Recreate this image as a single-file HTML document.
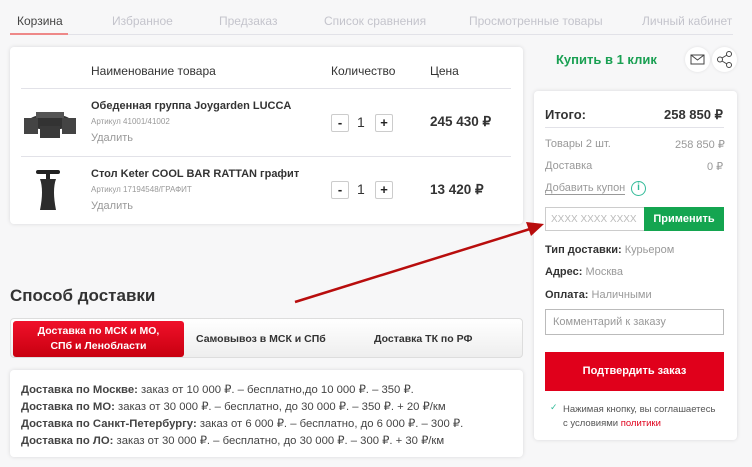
<!DOCTYPE html>
<html><head><meta charset="utf-8"><style>
*{box-sizing:border-box;margin:0;padding:0}
body{width:752px;height:467px;background:#f7f7f8;font-family:"Liberation Sans",sans-serif;position:relative;overflow:hidden;color:#333}
.a{position:absolute;white-space:nowrap}
.card{position:absolute;background:#fff;border-radius:4px;box-shadow:0 0 4px rgba(0,0,0,.12)}
.tab{font-size:12px;color:#c4c4cc;top:14px}
.b{font-weight:bold}
.g{color:#999}
.qb{position:absolute;width:18px;height:18px;border:1px solid #ccc;border-radius:2px;background:#fff;font-size:13px;font-weight:bold;text-align:center;line-height:16px;color:#222}
</style></head><body>
<div class="a tab" style="left:17px;color:#444">Корзина</div>
<div class="a tab" style="left:112px">Избранное</div>
<div class="a tab" style="left:219px">Предзаказ</div>
<div class="a tab" style="left:324px">Список сравнения</div>
<div class="a tab" style="left:469px">Просмотренные товары</div>
<div class="a tab" style="left:642px">Личный кабинет</div>
<div class="a" style="left:10px;top:34px;width:723px;height:1px;background:#e2e2e8"></div>
<div class="a" style="left:10px;top:33px;width:58px;height:2px;background:#e88"></div>

<div class="card" style="left:10px;top:47px;width:513px;height:177px"></div>
<div class="a" style="left:91px;top:64px;font-size:12px">Наименование товара</div>
<div class="a" style="left:331px;top:64px;font-size:12px">Количество</div>
<div class="a" style="left:430px;top:64px;font-size:12px">Цена</div>
<div class="a" style="left:21px;top:88px;width:490px;height:1px;background:#e2e2e8"></div>
<div class="a" style="left:21px;top:156px;width:490px;height:1px;background:#e2e2e8"></div>
<svg class="a" style="left:22px;top:108px" width="56" height="32"><ellipse cx="28" cy="14" rx="22" ry="8" fill="#333"/><rect x="2" y="10" width="14" height="16" fill="#444"/><rect x="40" y="10" width="14" height="16" fill="#444"/><rect x="18" y="18" width="20" height="12" fill="#3a3a3a"/><rect x="14" y="4" width="28" height="6" fill="#555"/></svg>
<svg class="a" style="left:36px;top:170px" width="28" height="43"><rect x="0" y="0" width="24" height="4" rx="2" fill="#222"/><rect x="10" y="3" width="4" height="6" fill="#222"/><path d="M4 9 H20 Q16 20 20 40 H4 Q8 20 4 9Z" fill="#2c2c2c"/></svg>
<div class="a b" style="left:91px;top:100px;font-size:11px">Обеденная группа Joygarden LUCCA</div>
<div class="a g" style="left:91px;top:117px;font-size:8px">Артикул 41001/41002</div>
<div class="a g" style="left:91px;top:132px;font-size:11px">Удалить</div>
<div class="a b" style="left:91px;top:168px;font-size:11px">Стол Keter COOL BAR RATTAN графит</div>
<div class="a g" style="left:91px;top:185px;font-size:8px">Артикул 17194548/ГРАФИТ</div>
<div class="a g" style="left:91px;top:200px;font-size:11px">Удалить</div>
<div class="qb" style="left:331px;top:114px">-</div><div class="a" style="left:357px;top:114px;font-size:14px">1</div><div class="qb" style="left:375px;top:114px">+</div>
<div class="qb" style="left:331px;top:181px">-</div><div class="a" style="left:357px;top:181px;font-size:14px">1</div><div class="qb" style="left:375px;top:181px">+</div>
<div class="a b" style="left:430px;top:114px;font-size:13.5px">245 430 ₽</div>
<div class="a b" style="left:430px;top:182px;font-size:13.5px">13 420 ₽</div>

<div class="a b" style="left:556px;top:52px;font-size:13px;color:#1aa053">Купить в 1 клик</div>
<div class="a" style="left:685px;top:47px;width:25px;height:25px;border-radius:50%;background:#fff;box-shadow:0 0 3px rgba(0,0,0,.1)"><svg width="25" height="25"><rect x="6" y="8" width="13" height="9" fill="none" stroke="#444"/><path d="M6 8 L12.5 13 L19 8" fill="none" stroke="#444"/></svg></div>
<div class="a" style="left:712px;top:47px;width:25px;height:25px;border-radius:50%;background:#fff;box-shadow:0 0 3px rgba(0,0,0,.1)"><svg width="25" height="25"><circle cx="17" cy="7" r="2.5" fill="none" stroke="#444"/><circle cx="8" cy="12.5" r="2.5" fill="none" stroke="#444"/><circle cx="17" cy="18" r="2.5" fill="none" stroke="#444"/><path d="M10 11 L15 8 M10 14 L15 17" stroke="#444"/></svg></div>

<div class="card" style="left:534px;top:91px;width:203px;height:349px"></div>
<div class="a b" style="left:545px;top:107px;font-size:13px">Итого:</div>
<div class="a b" style="left:664px;top:107px;font-size:13px">258 850 ₽</div>
<div class="a" style="left:545px;top:127px;width:179px;height:1px;background:#e2e2e8"></div>
<div class="a g" style="left:545px;top:138px;font-size:11px">Товары 2 шт.</div>
<div class="a g" style="left:675px;top:138px;font-size:11px">258 850 ₽</div>
<div class="a g" style="left:545px;top:160px;font-size:11px">Доставка</div>
<div class="a g" style="left:707px;top:160px;font-size:11px">0 ₽</div>
<div class="a g" style="left:545px;top:182px;font-size:11px;border-bottom:1px solid #999">Добавить купон</div>
<div class="a" style="left:631px;top:181px;width:15px;height:15px;border:1.5px solid #3b9;border-radius:50%;color:#3b9;font-size:10px;text-align:center;line-height:12px;font-weight:bold">i</div>
<div class="a" style="left:545px;top:207px;width:100px;height:24px;border:1px solid #ccc;font-size:10px;color:#bbb;padding:6px 0 0 5px;overflow:hidden">XXXX XXXX XXXX</div>
<div class="a b" style="left:644px;top:207px;width:80px;height:24px;background:#14a550;color:#fff;font-size:11px;text-align:center;line-height:24px">Применить</div>
<div class="a" style="left:545px;top:244px;font-size:11px"><b>Тип доставки:</b> <span class="g">Курьером</span></div>
<div class="a" style="left:545px;top:266px;font-size:11px"><b>Адрес:</b> <span class="g">Москва</span></div>
<div class="a" style="left:545px;top:289px;font-size:11px"><b>Оплата:</b> <span class="g">Наличными</span></div>
<div class="a" style="left:545px;top:309px;width:179px;height:26px;border:1px solid #bbb;font-size:11px;color:#999;padding:6px 0 0 7px">Комментарий к заказу</div>
<div class="a b" style="left:545px;top:352px;width:179px;height:39px;background:#e0001b;color:#fff;font-size:11px;text-align:center;line-height:39px">Подтвердить заказ</div>
<div class="a" style="left:550px;top:402px;font-size:9px;color:#3b9">✓</div>
<div class="a" style="left:563px;top:403px;font-size:9.5px;color:#555;line-height:14px">Нажимая кнопку, вы соглашаетесь<br>с условиями <span style="color:#e0001b">политики</span></div>

<div class="a b" style="left:10px;top:286px;font-size:17px">Способ доставки</div>
<div class="a" style="left:10px;top:318px;width:513px;height:40px;border-radius:4px;background:linear-gradient(#fff,#eee);border:1px solid #ddd"></div>
<div class="a b" style="left:13px;top:321px;width:171px;height:36px;border-radius:3px;background:linear-gradient(#f0102a,#c80010);color:#fff;font-size:10.5px;text-align:center;line-height:15px;padding-top:3px;white-space:normal">Доставка по МСК и МО,<br>СПб и Ленобласти</div>
<div class="a b" style="left:196px;top:333px;font-size:10.5px">Самовывоз в МСК и СПб</div>
<div class="a b" style="left:374px;top:333px;font-size:10.5px">Доставка ТК по РФ</div>
<div class="card" style="left:10px;top:370px;width:513px;height:87px"></div>
<div class="a" style="left:21px;top:382px;font-size:11.3px;line-height:17px;color:#444">
<b>Доставка по Москве:</b> заказ от 10 000 ₽. – бесплатно,до 10 000 ₽. – 350 ₽.<br>
<b>Доставка по МО:</b> заказ от 30 000 ₽. – бесплатно, до 30 000 ₽. – 350 ₽. + 20 ₽/км<br>
<b>Доставка по Санкт-Петербургу:</b> заказ от 6 000 ₽. – бесплатно, до 6 000 ₽. – 300 ₽.<br>
<b>Доставка по ЛО:</b> заказ от 30 000 ₽. – бесплатно, до 30 000 ₽. – 300 ₽. + 30 ₽/км</div>

<svg class="a" style="left:0;top:0" width="752" height="467"><line x1="295" y1="302" x2="530" y2="229" stroke="#b80d0d" stroke-width="2.5"/><polygon points="544,224 526,222 531,236" fill="#b80d0d"/></svg>
</body></html>
